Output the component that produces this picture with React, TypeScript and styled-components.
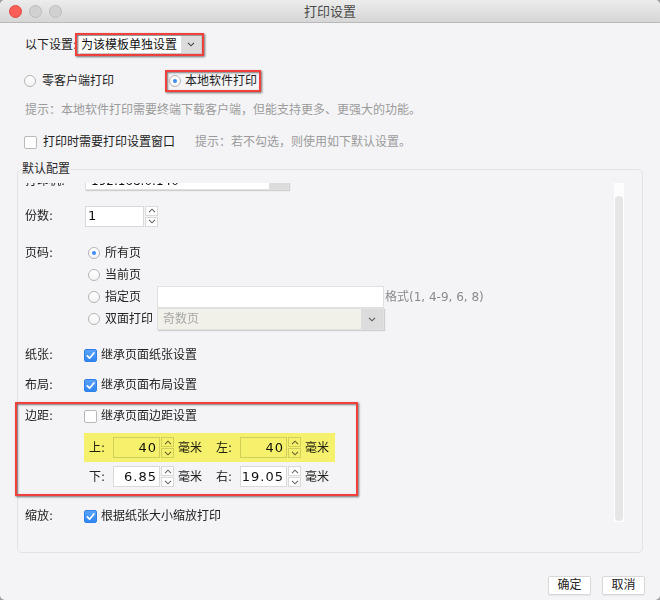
import React, { useState } from 'react'
import styled, { createGlobalStyle } from 'styled-components'

const GlobalStyle = createGlobalStyle`
  * { box-sizing: border-box; }
  html, body { margin: 0; padding: 0; background: #9d9d9d; }
  body {
    font-family: "DejaVu Sans", "Noto Sans CJK SC", sans-serif;
    font-size: 12px;
    color: #222;
  }
`

function Chevron({ up = false, color = '#555' }: { up?: boolean; color?: string }) {
  return (
    <svg width="8" height="5" viewBox="0 0 8 5">
      <path
        d={up ? 'M1 4.2L4 1.2l3 3' : 'M1 0.8l3 3 3-3'}
        fill="none"
        stroke={color}
        strokeWidth="1.1"
      />
    </svg>
  )
}

function Tick() {
  return (
    <svg width="11" height="11" viewBox="0 0 11 11">
      <path
        d="M2.3 5.8l2.3 2.4 4.3-5.2"
        fill="none"
        stroke="#fff"
        strokeWidth="1.7"
        strokeLinecap="round"
        strokeLinejoin="round"
      />
    </svg>
  )
}

function Spinner({ value, width, right }: { value: string; width: number; right?: boolean }) {
  return (
    <SpinWrap>
      <SpinField $width={width} $right={right}>
        {value}
      </SpinField>
      <SpinArrows>
        <SpinButton>
          <Chevron up color="#666" />
        </SpinButton>
        <SpinButton>
          <Chevron color="#666" />
        </SpinButton>
      </SpinArrows>
    </SpinWrap>
  )
}

function MarginPair({ label, value }: { label: string; value: string }) {
  return (
    <Pair>
      <PairLabel>{label}</PairLabel>
      <Spinner value={value} width={47} right />
      <Unit>毫米</Unit>
    </Pair>
  )
}

export default function App() {
  const [mode, setMode] = useState('local')
  const [askDialog, setAskDialog] = useState(false)
  const [pages, setPages] = useState('all')
  const [inherit, setInherit] = useState({ paper: true, layout: true, margin: false, scale: true })

  const toggle = (key: keyof typeof inherit) =>
    setInherit({ ...inherit, [key]: !inherit[key] })

  const pageOptions = [
    { key: 'all', text: '所有页' },
    { key: 'current', text: '当前页' },
    { key: 'range', text: '指定页' },
    { key: 'duplex', text: '双面打印' },
  ]

  return (
    <>
      <GlobalStyle />
      <Window>
        <TitleBar>
          <Lights>
            <Light $color="#fc5f57" $edge="#de4a41" />
            <Light $color="#d1d1d1" $edge="#bcbcbc" />
            <Light $color="#d1d1d1" $edge="#bcbcbc" />
          </Lights>
          <Title>打印设置</Title>
          <span />
        </TitleBar>

        <Body>
          <SettingRow>
            <span>以下设置:</span>
            <SettingFrame>
              <Combo>
                <ComboText>为该模板单独设置</ComboText>
                <ComboArrow>
                  <Chevron color="#444" />
                </ComboArrow>
              </Combo>
            </SettingFrame>
          </SettingRow>

          <ModeRow>
            <RadioOption $gap={6} onClick={() => setMode('cloud')}>
              <Radio $checked={mode === 'cloud'} />
              零客户端打印
            </RadioOption>
            <ModeFrame>
              <RadioOption $gap={4} onClick={() => setMode('local')}>
                <Radio $checked={mode === 'local'} />
                本地软件打印
              </RadioOption>
            </ModeFrame>
          </ModeRow>

          <Hint $indent={8}>提示：本地软件打印需要终端下载客户端，但能支持更多、更强大的功能。</Hint>

          <PromptRow>
            <CheckOption $gap={6} onClick={() => setAskDialog(!askDialog)}>
              <Checkbox $checked={askDialog}>{askDialog && <Tick />}</Checkbox>
              打印时需要打印设置窗口
            </CheckOption>
            <Hint $indent={20}>提示：若不勾选，则使用如下默认设置。</Hint>
          </PromptRow>

          <Group>
            <GroupTitle>默认配置</GroupTitle>
            <GroupInner>
              <Viewport>
                <ScrollContent $offset={20}>
                  <FormRow $bottom>
                    <FieldLabel $low>打印机:</FieldLabel>
                    <Combo $width={204} $height={22} $bordered>
                      <ComboText $pad={5} $low>192.168.0.140</ComboText>
                      <ComboArrow $width={19}>
                        <Chevron color="#666" />
                      </ComboArrow>
                    </Combo>
                  </FormRow>

                  <FormRow $mt={15}>
                    <FieldLabel>份数:</FieldLabel>
                    <Spinner value="1" width={59} />
                  </FormRow>

                  <FormRow $mt={15} $top>
                    <FieldLabel>页码:</FieldLabel>
                    <RadioList>
                      {pageOptions.map(opt => (
                        <RadioLine key={opt.key}>
                          <PageRadio onClick={() => setPages(opt.key)}>
                            <Radio $checked={pages === opt.key} />
                            {opt.text}
                          </PageRadio>
                          {opt.key === 'range' && (
                            <>
                              <TextBox />
                              <FormatHint>格式(1, 4-9, 6, 8)</FormatHint>
                            </>
                          )}
                          {opt.key === 'duplex' && (
                            <Combo $width={227} $height={22} $bordered $disabled>
                              <ComboText $pad={5} $muted>
                                奇数页
                              </ComboText>
                              <ComboArrow $width={22}>
                                <Chevron color="#555" />
                              </ComboArrow>
                            </Combo>
                          )}
                        </RadioLine>
                      ))}
                    </RadioList>
                  </FormRow>

                  <FormRow $mt={14}>
                    <FieldLabel>纸张:</FieldLabel>
                    <CheckOption $gap={4} $shift={-1} onClick={() => toggle('paper')}>
                      <Checkbox $checked={inherit.paper}>{inherit.paper && <Tick />}</Checkbox>
                      继承页面纸张设置
                    </CheckOption>
                  </FormRow>

                  <FormRow $mt={8}>
                    <FieldLabel>布局:</FieldLabel>
                    <CheckOption $gap={4} $shift={-1} onClick={() => toggle('layout')}>
                      <Checkbox $checked={inherit.layout}>{inherit.layout && <Tick />}</Checkbox>
                      继承页面布局设置
                    </CheckOption>
                  </FormRow>

                  <MarginFrame>
                    <FormRow>
                      <FieldLabel>边距:</FieldLabel>
                      <CheckOption $gap={4} $shift={-1} onClick={() => toggle('margin')}>
                        <Checkbox $checked={inherit.margin}>{inherit.margin && <Tick />}</Checkbox>
                        继承页面边距设置
                      </CheckOption>
                    </FormRow>
                    <MarginGrid>
                      <MarginRow $highlight>
                        <MarginPair label="上:" value="40" />
                        <MarginPair label="左:" value="40" />
                      </MarginRow>
                      <MarginRow>
                        <MarginPair label="下:" value="6.85" />
                        <MarginPair label="右:" value="19.05" />
                      </MarginRow>
                    </MarginGrid>
                  </MarginFrame>

                  <FormRow $mt={9}>
                    <FieldLabel>缩放:</FieldLabel>
                    <CheckOption $gap={4} $shift={-1} onClick={() => toggle('scale')}>
                      <Checkbox $checked={inherit.scale}>{inherit.scale && <Tick />}</Checkbox>
                      根据纸张大小缩放打印
                    </CheckOption>
                  </FormRow>
                </ScrollContent>
              </Viewport>
              <ScrollTrack>
                <ScrollThumb />
              </ScrollTrack>
            </GroupInner>
          </Group>
        </Body>

        <Footer>
          <Button>确定</Button>
          <Button>取消</Button>
        </Footer>
      </Window>
    </>
  )
}

const Window = styled.div`
  width: 660px;
  height: 600px;
  background: #f4f4f6;
  border-radius: 5px;
  overflow: hidden;
  display: flex;
  flex-direction: column;
`

const TitleBar = styled.div`
  height: 23px;
  flex-shrink: 0;
  display: grid;
  grid-template-columns: 1fr auto 1fr;
  align-items: center;
  padding: 0 9px;
  background: linear-gradient(#ececec, #d6d6d6);
  border-bottom: 1px solid #b9b9b9;
`

const Lights = styled.div`
  display: flex;
  gap: 7px;
`

const Light = styled.span<{ $color: string; $edge: string }>`
  width: 13px;
  height: 13px;
  border-radius: 50%;
  background: ${p => p.$color};
  border: 1px solid ${p => p.$edge};
`

const Title = styled.div`
  font-family: "Noto Sans CJK SC", sans-serif;
  font-size: 13px;
  line-height: 16px;
  color: #4a4a4a;
`

const Body = styled.div`
  padding: 0 17px;
  display: flex;
  flex-direction: column;
`

const Annotated = styled.div`
  border: 2px solid #f2403c;
  box-shadow: 1px 1px 2px rgba(0, 0, 0, 0.55), inset 1px 1px 2px rgba(0, 0, 0, 0.5);
`

const SettingRow = styled.div`
  margin-top: 10px;
  height: 23px;
  padding-left: 8px;
  display: flex;
  align-items: center;
  line-height: 16px;
`

const SettingFrame = styled(Annotated)`
  margin-left: -2px;
  width: 129px;
  height: 23px;
  padding: 1px 1px 1px 2px;
  display: flex;
`

const Combo = styled.div<{ $width?: number; $height?: number; $bordered?: boolean; $disabled?: boolean }>`
  display: flex;
  flex: ${p => (p.$width ? '0 0 auto' : '1')};
  width: ${p => (p.$width ? `${p.$width}px` : 'auto')};
  height: ${p => (p.$height ? `${p.$height}px` : 'auto')};
  background: ${p => (p.$disabled ? '#f2f1e9' : '#fff')};
  border: ${p => (p.$bordered ? '1px solid #e0e0e0' : 'none')};
  box-shadow: 1px 1px 1px rgba(0, 0, 0, 0.15);
`

const ComboText = styled.div<{ $pad?: number; $muted?: boolean; $low?: boolean }>`
  flex: 1;
  display: flex;
  align-items: ${p => (p.$low ? 'flex-end' : 'center')};
  padding-left: ${p => p.$pad ?? 2}px;
  padding-bottom: ${p => (p.$low ? 1 : 0)}px;
  line-height: 14px;
  color: ${p => (p.$muted ? '#a8a8a8' : '#111')};
  white-space: nowrap;
  overflow: hidden;
`

const ComboArrow = styled.div<{ $width?: number }>`
  width: ${p => p.$width ?? 20}px;
  background: #dcdcdc;
  display: flex;
  align-items: center;
  justify-content: center;
`

const ModeRow = styled.div`
  margin-top: 14px;
  height: 22px;
  padding-left: 7px;
  display: flex;
  align-items: center;
  gap: 51px;
  line-height: 16px;
`

const ModeFrame = styled(Annotated)`
  height: 22px;
  padding: 0 2px;
  display: flex;
  align-items: center;
`

const RadioOption = styled.label<{ $gap: number }>`
  display: flex;
  align-items: center;
  gap: ${p => p.$gap}px;
  cursor: pointer;
`

const Radio = styled.span<{ $checked: boolean }>`
  width: 12px;
  height: 12px;
  flex-shrink: 0;
  border-radius: 50%;
  border: 1px solid #b4b4b4;
  background: linear-gradient(#fff, #f4f4f4);
  display: flex;
  align-items: center;
  justify-content: center;
  &::after {
    content: '';
    width: 4px;
    height: 4px;
    border-radius: 50%;
    background: ${p => (p.$checked ? '#3a8df5' : 'transparent')};
  }
`

const Hint = styled.div<{ $indent: number }>`
  margin-top: ${p => (p.$indent === 8 ? 10 : 0)}px;
  padding-left: ${p => p.$indent}px;
  line-height: 16px;
  color: #9b9b9b;
  white-space: nowrap;
`

const PromptRow = styled.div`
  margin-top: 16px;
  height: 16px;
  padding-left: 7px;
  display: flex;
  align-items: center;
  line-height: 16px;
`

const CheckOption = styled.label<{ $gap: number; $shift?: number }>`
  display: flex;
  align-items: center;
  gap: ${p => p.$gap}px;
  margin-left: ${p => p.$shift ?? 0}px;
  cursor: pointer;
  white-space: nowrap;
`

const Checkbox = styled.span<{ $checked: boolean }>`
  width: 13px;
  height: 13px;
  flex-shrink: 0;
  border-radius: 2px;
  display: flex;
  align-items: center;
  justify-content: center;
  border: 1px solid ${p => (p.$checked ? '#2f7fe8' : '#b9b9b9')};
  background: ${p => (p.$checked ? 'linear-gradient(#5aa3fb, #3085f2)' : '#fff')};
`

const Group = styled.fieldset`
  margin: 12px 0 0;
  height: 391px;
  min-width: 0;
  padding: 7px 17px 7px 7px;
  border: 1px solid #e2e2e4;
  border-radius: 5px;
`

const GroupTitle = styled.legend`
  margin-left: -3px;
  padding: 0;
  font-size: 12px;
  line-height: 14px;
  color: #2a2a2a;
`

const GroupInner = styled.div`
  height: 362px;
  display: flex;
`

const Viewport = styled.div`
  flex: 1;
  display: flex;
  flex-direction: column;
  clip-path: inset(0 -12px);
`

const ScrollContent = styled.div<{ $offset: number }>`
  flex-shrink: 0;
  margin-top: -${p => p.$offset}px;
  padding: 5px 0 20px;
  display: flex;
  flex-direction: column;
  line-height: 16px;
`

const FormRow = styled.div<{ $mt?: number; $top?: boolean; $bottom?: boolean }>`
  margin-top: ${p => p.$mt ?? 0}px;
  min-height: 22px;
  display: flex;
  align-items: ${p => (p.$top ? 'flex-start' : p.$bottom ? 'flex-end' : 'center')};
`

const FieldLabel = styled.div<{ $low?: boolean }>`
  width: 60px;
  flex-shrink: 0;
  line-height: ${p => (p.$low ? '14px' : '22px')};
  padding-bottom: ${p => (p.$low ? 2 : 0)}px;
  white-space: nowrap;
`

const SpinWrap = styled.div`
  display: flex;
  gap: 1px;
  height: 21px;
`

const SpinField = styled.div<{ $width: number; $right?: boolean }>`
  width: ${p => p.$width}px;
  height: 21px;
  background: #fff;
  border: 1px solid #dadada;
  display: flex;
  align-items: center;
  justify-content: ${p => (p.$right ? 'flex-end' : 'flex-start')};
  padding: ${p => (p.$right ? '0 2px 0 0' : '0 0 0 2px')};
  font-size: 13px;
  letter-spacing: ${p => (p.$right ? '1px' : '0')};
  color: #111;
`

const SpinArrows = styled.div`
  width: 13px;
  display: flex;
  flex-direction: column;
  gap: 1px;
`

const SpinButton = styled.div`
  flex: 1;
  background: #fff;
  border: 1px solid #dadada;
  display: flex;
  align-items: center;
  justify-content: center;
`

const RadioList = styled.div`
  display: flex;
  flex-direction: column;
`

const RadioLine = styled.div`
  height: 22px;
  display: flex;
  align-items: center;
`

const PageRadio = styled.label`
  width: 72px;
  flex-shrink: 0;
  padding-left: 3px;
  display: flex;
  align-items: center;
  gap: 5px;
  cursor: pointer;
  white-space: nowrap;
`

const TextBox = styled.div`
  width: 227px;
  height: 22px;
  background: #fff;
  border: 1px solid #e0e0e0;
`

const FormatHint = styled.span`
  margin-left: 1px;
  color: #8a8a8a;
  white-space: nowrap;
`

const MarginFrame = styled(Annotated)`
  margin: 6px 0 0 -10px;
  width: 343px;
  padding: 1px 0 3px 8px;
`

const MarginGrid = styled.div`
  margin: 6px 0 0 59px;
  display: flex;
  flex-direction: column;
`

const MarginRow = styled.div<{ $highlight?: boolean }>`
  position: relative;
  width: 251px;
  height: 29px;
  padding: 0 6px 0 5px;
  display: flex;
  align-items: center;
  gap: 14px;
  &::after {
    content: '';
    display: ${p => (p.$highlight ? 'block' : 'none')};
    position: absolute;
    inset: 0;
    background: #f6f16c;
    mix-blend-mode: multiply;
    pointer-events: none;
  }
`

const Pair = styled.div`
  display: flex;
  align-items: center;
`

const PairLabel = styled.span`
  width: 24px;
  white-space: nowrap;
`

const Unit = styled.span`
  margin-left: 4px;
  white-space: nowrap;
`

const ScrollTrack = styled.div`
  width: 10px;
  height: 339px;
  margin-right: 1px;
  padding: 13px 1px 1px;
  background: #fdfdfd;
  display: flex;
`

const ScrollThumb = styled.div`
  flex: 1;
  border-radius: 4px;
  background: #e6e6e6;
`

const Footer = styled.div`
  margin-top: 23px;
  padding-right: 15px;
  display: flex;
  justify-content: flex-end;
  gap: 11px;
`

const Button = styled.button`
  width: 43px;
  height: 19px;
  padding: 0;
  background: #fff;
  border: 1px solid #d8d8d8;
  border-radius: 2px;
  box-shadow: 0 1px 1px rgba(0, 0, 0, 0.06);
  font-family: "DejaVu Sans", "Noto Sans CJK SC", sans-serif;
  font-size: 12px;
  line-height: 17px;
  color: #222;
  cursor: pointer;
`
